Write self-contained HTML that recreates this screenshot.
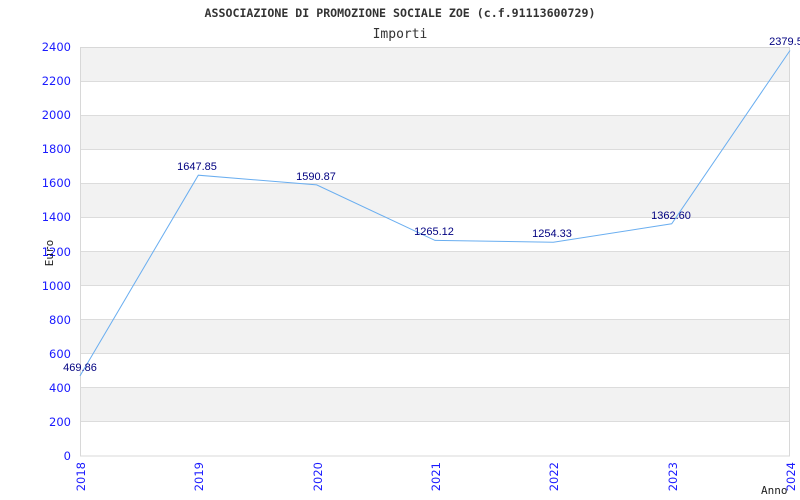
<!DOCTYPE html>
<html><head><meta charset="utf-8"><style>body{margin:0;background:#fff}</style></head><body>
<svg width="800" height="500" xmlns="http://www.w3.org/2000/svg" style="display:block">
<rect width="800" height="500" fill="#fff"/>
<g fill="#f2f2f2">
<rect x="80" y="47" width="710" height="34.08"/>
<rect x="80" y="115.17" width="710" height="34.08"/>
<rect x="80" y="183.33" width="710" height="34.08"/>
<rect x="80" y="251.5" width="710" height="34.08"/>
<rect x="80" y="319.67" width="710" height="34.08"/>
<rect x="80" y="387.83" width="710" height="34.08"/>
</g>
<g stroke="#dcdcdc" stroke-width="1">
<line x1="80" x2="790" y1="81.5" y2="81.5"/><line x1="80" x2="790" y1="115.5" y2="115.5"/>
<line x1="80" x2="790" y1="149.5" y2="149.5"/><line x1="80" x2="790" y1="183.5" y2="183.5"/>
<line x1="80" x2="790" y1="217.5" y2="217.5"/><line x1="80" x2="790" y1="251.5" y2="251.5"/>
<line x1="80" x2="790" y1="285.5" y2="285.5"/><line x1="80" x2="790" y1="319.5" y2="319.5"/>
<line x1="80" x2="790" y1="353.5" y2="353.5"/><line x1="80" x2="790" y1="387.5" y2="387.5"/>
<line x1="80" x2="790" y1="421.5" y2="421.5"/>
</g>
<rect x="80.5" y="47.5" width="709" height="408.5" fill="none" stroke="#d8d8d8"/>
<polyline fill="none" stroke="#6aaef0" stroke-width="1" points="80,375.9 198.3,175.2 316.7,184.9 435,240.4 553.3,242.2 671.7,223.8 790,50.5"/>
<g font-family="Liberation Sans, sans-serif" font-size="11" fill="#000080" text-anchor="middle">
<text x="80" y="371">469.86</text><text x="197" y="170">1647.85</text><text x="316" y="180">1590.87</text>
<text x="434" y="235">1265.12</text><text x="552" y="237">1254.33</text><text x="671" y="219">1362.60</text>
<text x="786" y="45">2379.5</text>
</g>
<g font-family="DejaVu Sans, sans-serif" font-size="11.5" fill="#1a1aff" text-anchor="end">
<text x="71" y="51">2400</text><text x="71" y="85">2200</text><text x="71" y="119">2000</text>
<text x="71" y="153">1800</text><text x="71" y="187">1600</text><text x="71" y="221">1400</text>
<text x="71" y="256">1200</text><text x="71" y="290">1000</text><text x="71" y="324">800</text>
<text x="71" y="358">600</text><text x="71" y="392">400</text><text x="71" y="426">200</text>
<text x="71" y="460">0</text>
</g>
<g font-family="DejaVu Sans, sans-serif" font-size="11.5" fill="#1a1aff" text-anchor="end">
<text transform="translate(85,462) rotate(-90)">2018</text>
<text transform="translate(203,462) rotate(-90)">2019</text>
<text transform="translate(322,462) rotate(-90)">2020</text>
<text transform="translate(440,462) rotate(-90)">2021</text>
<text transform="translate(558,462) rotate(-90)">2022</text>
<text transform="translate(677,462) rotate(-90)">2023</text>
<text transform="translate(795,462) rotate(-90)">2024</text>
</g>
<text x="400" y="17" text-anchor="middle" font-family="DejaVu Sans Mono, Liberation Mono, monospace" font-size="11.6" font-weight="bold" fill="#333">ASSOCIAZIONE DI PROMOZIONE SOCIALE ZOE (c.f.91113600729)</text>
<text x="400" y="38" text-anchor="middle" font-family="DejaVu Sans Mono, Liberation Mono, monospace" font-size="13" fill="#333">Importi</text>
<text transform="translate(53,253) rotate(-90)" text-anchor="middle" font-family="DejaVu Sans Mono, monospace" font-size="11" fill="#222">Euro</text>
<text x="761" y="494" font-family="DejaVu Sans Mono, monospace" font-size="11" fill="#222">Anno</text>
</svg>
</body></html>
